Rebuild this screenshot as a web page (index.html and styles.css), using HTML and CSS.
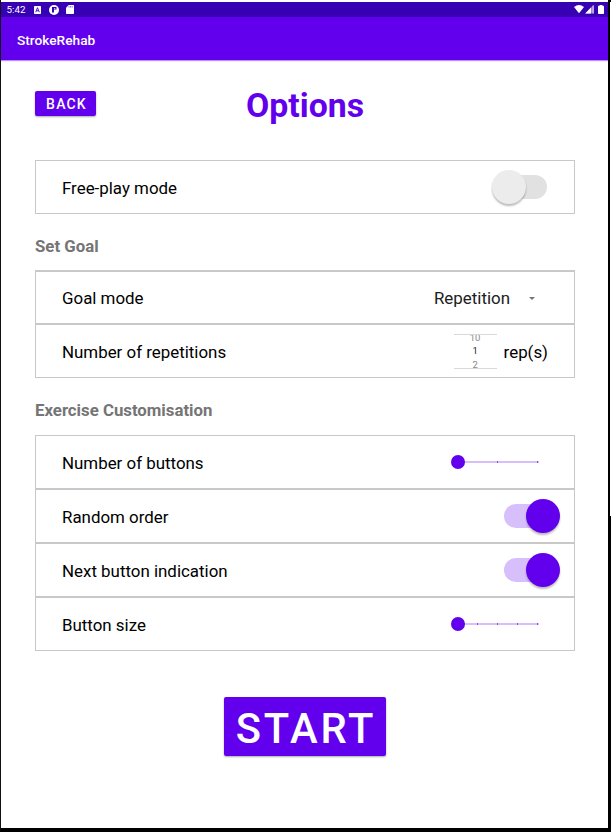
FILE: index.html
```html
<!DOCTYPE html>
<html lang="en">
<head>
<meta charset="utf-8">
<title>StrokeRehab</title>
<link rel="stylesheet" href="styles.css">
</head>
<body>
<div class="device">
  <div class="screen">
    <header class="status">
      <span class="clock">5:42</span>
      <svg class="keyboard" width="7" height="8" viewBox="0 0 7 8"><rect width="7" height="8" rx=".7" fill="#fff"/><path d="M1.7 6.2 3.5 1.7 5.3 6.2M2.4 4.8H4.6" fill="none" stroke="#3700b3" stroke-width=".9"/></svg>
      <svg class="pulse" width="10" height="10" viewBox="0 0 10 10"><circle cx="5" cy="5" r="5" fill="#fff"/><path d="M3 2H7.5V4.6H5V7.6H3Z" fill="#3700b3"/><path d="M5 3H6.3V3.8H5Z" fill="#fff"/></svg>
      <svg class="card-icon" width="8" height="9" viewBox="0 0 8 9"><path d="M2.7 0H7.3Q8 0 8 .7V8.3Q8 9 7.3 9H.7Q0 9 0 8.3V2.7Z" fill="#fff"/><path d="M3 1.1V2.5M4.6 1.1V2.5M6.2 1.1V2.5" stroke="#3700b3" stroke-width=".6"/></svg>
      <svg class="signals" width="30" height="9" viewBox="0 0 30 9"><path d="M0 2Q5-1.8 10 2L5 8.2Z" fill="#fff"/><path d="M11.2 8.5 19.5 0V8.5Z" fill="#fff" opacity=".5"/><path d="M11.2 8.5 17 2.6V8.5Z" fill="#fff"/><path d="M19.2.5V8.5" stroke="#fff" stroke-width=".8"/><path d="M25.6 0H28.4V.8H29.3Q30 .8 30 1.5V8.3Q30 9 29.3 9H24.7Q24 9 24 8.3V1.5Q24 .8 24.7.8H25.6Z" fill="#fff"/></svg>
    </header>
    <div class="appbar">StrokeRehab</div>
    <main>
      <div class="heading">
        <button class="back">BACK</button>
        <h1>Options</h1>
      </div>
      <section class="group">
        <div class="row"><span>Free-play mode</span><span class="switch off"><i class="thumb"></i></span></div>
      </section>
      <h2>Set Goal</h2>
      <section class="group goal">
        <div class="row"><span>Goal mode</span><span class="select">Repetition<i class="caret"></i></span></div>
        <div class="row"><span>Number of repetitions</span>
          <span class="reps"><span class="picker"><span class="near">10</span><span>1</span><span class="near">2</span></span><span>rep(s)</span></span>
        </div>
      </section>
      <h2>Exercise Customisation</h2>
      <section class="group">
        <div class="row"><span>Number of buttons</span>
          <svg class="slider" width="90" height="14" viewBox="0 0 90 14"><path d="M7 7H88" stroke="#d6bffa" stroke-width="2"/><path d="M46 7H47M86 7H87" stroke="#8b4ce0" stroke-width="2"/><circle cx="7" cy="7" r="7" fill="#6200ee"/></svg>
        </div>
        <div class="row"><span>Random order</span><span class="switch on"><i class="thumb"></i></span></div>
        <div class="row"><span>Next button indication</span><span class="switch on"><i class="thumb"></i></span></div>
        <div class="row"><span>Button size</span>
          <svg class="slider" width="90" height="14" viewBox="0 0 90 14"><path d="M7 7H88" stroke="#d6bffa" stroke-width="2"/><path d="M26 7H27M46 7H47M66 7H67M86 7H87" stroke="#8b4ce0" stroke-width="2"/><circle cx="7" cy="7" r="7" fill="#6200ee"/></svg>
        </div>
      </section>
      <button class="start">START</button>
    </main>
  </div>
  <div class="edge"></div>
</div>
</body>
</html>
```
FILE: styles.css
```css
* { box-sizing: border-box; }
body { margin: 0; background: #fff; font-family: Roboto, sans-serif; color: #000; }
.device { display: flex; width: 611px; height: 832px; border-left: 1px solid #111; border-bottom: 4px solid #000; overflow: hidden; }
.screen { width: 607px; padding-top: 2px; }
.edge { width: 3px; background: linear-gradient(#fff, #fff) 2px 2px / 1px 514px no-repeat #000; }
.status { display: flex; align-items: center; height: 15px; padding: 0 4px 0 5.5px; background: #3700b3; color: #fff; }
.clock { width: 27.5px; font-size: 9.8px; font-weight: 400; line-height: 15px; }
.pulse { margin-left: 8px; }
.card-icon { margin-left: 7px; }
.signals { margin-left: auto; }
.appbar { height: 43px; padding-left: 16px; background: #6200ee; color: #fff; font-size: 13.7px; font-weight: 500; line-height: 46px; box-shadow: 0 1px 1px #6200ee70; }
main { display: flex; flex-direction: column; padding: 0 33px 0 34px; }
.heading { display: grid; grid-template-columns: 61px 1fr 61px; align-items: center; height: 100px; padding-bottom: 13px; }
button { border: 0; padding: 0; border-radius: 2px; background: #6200ee; color: #fff; font-family: inherit; font-weight: 500; box-shadow: 0 1px 2px #0005; }
.back { height: 25px; font-size: 14px; letter-spacing: 1.2px; line-height: 26px; padding-left: 2px; }
h1 { margin: 4px 0 0; text-align: center; font-size: 33.8px; line-height: 40px; color: #6200ee; }
h2 { height: 56px; margin: 0; padding-top: 22px; font-size: 16.8px; line-height: 20px; color: #757575; }
.goal + h2 { height: 57px; }
.row { display: flex; justify-content: space-between; align-items: center; height: 54px; padding: 1px 26px 0; border: 1px solid #c8c8c8; font-size: 16.9px; }
.goal { border-top: 1px solid #cacaca; }
.goal .row:first-child { height: 53px; }
.switch { display: flex; align-items: center; width: 43px; height: 24px; border-radius: 12px; margin: -1px 1px 0 0; }
.thumb { flex: none; width: 34px; height: 34px; border-radius: 50%; box-shadow: 0 2px 2px #0004; }
.off { background: #e1e1e1; }
.off .thumb { margin-left: -12.5px; background: #ececec; }
.on { justify-content: flex-end; background: #d6bffa; }
.on .thumb { margin-right: -12.5px; background: #6200ee; }
.select { display: flex; align-items: center; color: #202020; margin-right: 13px; }
.caret { margin-left: 19px; border: 3.5px solid transparent; border-top-color: #757575; border-bottom: 0; }
.reps { display: flex; align-items: center; gap: 7px; }
.picker { display: flex; flex-direction: column; justify-content: center; align-items: center; width: 43px; height: 35px; margin-top: -1px; border: solid #d9d9d9; border-width: 1px 0; overflow: hidden; font-size: 9.5px; line-height: 13.5px; color: #222; }
.near { color: #888; }
.slider { margin: -1px 7px 0 0; }
.start { align-self: center; width: 162px; height: 59px; margin: 46px 1px 0 0; padding-left: 3px; font-size: 41.7px; line-height: 63px; letter-spacing: 2.8px; }
```
